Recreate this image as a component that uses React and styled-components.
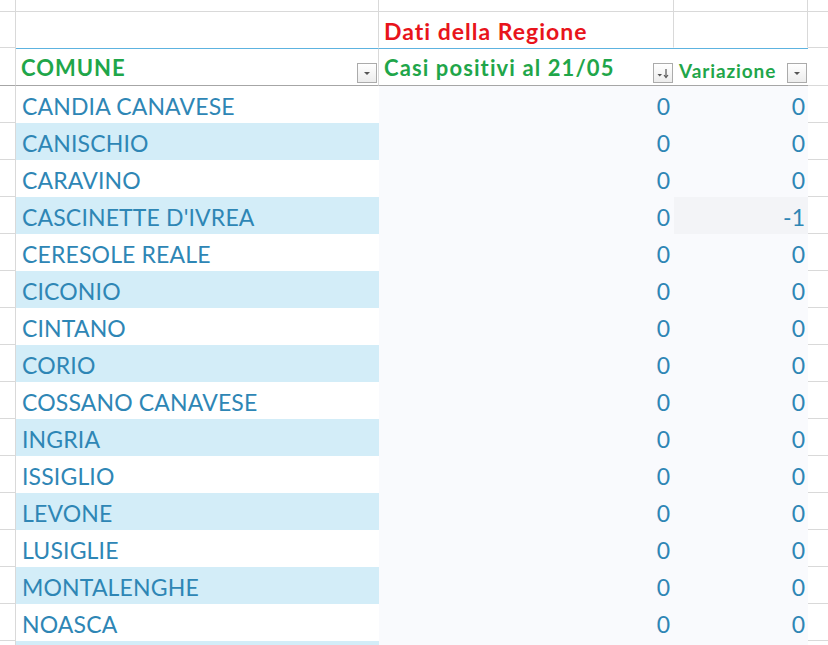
import React from "react";
import styled, { createGlobalStyle } from "styled-components";

const GlobalStyle = createGlobalStyle`
  html, body { margin: 0; padding: 0; background: #ffffff; }
  body { font-family: Lato, "Open Sans", sans-serif; overflow: hidden; }
`;

const COLS = "16px 363px 295px 134px 1fr";
const GRID = "#d9d9d9";

const comuni = [
  ["CANDIA CANAVESE", 0, 0],
  ["CANISCHIO", 0, 0],
  ["CARAVINO", 0, 0],
  ["CASCINETTE D'IVREA", 0, -1],
  ["CERESOLE REALE", 0, 0],
  ["CICONIO", 0, 0],
  ["CINTANO", 0, 0],
  ["CORIO", 0, 0],
  ["COSSANO CANAVESE", 0, 0],
  ["INGRIA", 0, 0],
  ["ISSIGLIO", 0, 0],
  ["LEVONE", 0, 0],
  ["LUSIGLIE", 0, 0],
  ["MONTALENGHE", 0, 0],
  ["NOASCA", 0, 0],
];

const Sheet = styled.div`
  width: 828px;
  height: 645px;
  overflow: hidden;
  background: #fff;
`;

const Row = styled.div`
  display: grid;
  grid-template-columns: ${COLS};
  height: ${(p) => p.h}px;
`;

const Gutter = styled.div`
  border-right: 1px solid ${GRID};
  border-bottom: 1px solid ${(p) => (p.dark ? "#a6a6a6" : GRID)};
`;

const Plain = styled.div`
  border-right: 1px solid ${GRID};
  border-bottom: 1px solid ${(p) => p.line || GRID};
  display: flex;
  align-items: flex-end;
  padding: 0 0 4px 5px;
  box-sizing: border-box;
`;

const Title = styled.span`
  color: #e8141b;
  font-weight: 700;
  font-size: 23px;
  letter-spacing: 1px;
  line-height: 1;
`;

const HeadCell = styled.div`
  border-top: 1px solid #5db3e0;
  border-bottom: 1px solid #a6a6a6;
  border-right: ${(p) => (p.sep ? `1px solid ${GRID}` : "none")};
  display: flex;
  align-items: flex-end;
  justify-content: space-between;
  padding: 0 1px 2px 5px;
  box-sizing: border-box;
`;

const HeadText = styled.span`
  color: #1fa64a;
  font-weight: 700;
  font-size: ${(p) => p.size || 22}px;
  letter-spacing: ${(p) => p.ls || 1}px;
  line-height: 1;
  padding-bottom: ${(p) => p.pb || 4}px;
  white-space: nowrap;
`;

const FilterBtn = styled.div`
  flex: none;
  width: 18px;
  height: 18px;
  border: 1px solid #ababab;
  background: linear-gradient(#ffffff, #ececec);
  display: flex;
  align-items: center;
  justify-content: center;
`;

const Name = styled.div`
  background: ${(p) => (p.stripe ? "#d3edf8" : "#ffffff")};
  color: #2e86b5;
  font-size: 23px;
  letter-spacing: 0.15px;
  display: flex;
  align-items: center;
  padding: 3px 0 0 6px;
  box-sizing: border-box;
  white-space: nowrap;
`;

const Num = styled.div`
  background: ${(p) => (p.sel ? "#f3f4f7" : "#f9fafd")};
  color: #2e86b5;
  font-size: 23px;
  display: flex;
  align-items: center;
  justify-content: flex-end;
  padding: 3px ${(p) => p.pr}px 0 0;
  box-sizing: border-box;
`;

const Edge = styled.div`
  border-bottom: 1px solid ${GRID};
`;

const DropIcon = () => (
  <svg width="10" height="10" viewBox="0 0 10 10">
    <path d="M2 4 L8 4 L5 7 Z" fill="#555" />
  </svg>
);

const SortIcon = () => (
  <svg width="14" height="12" viewBox="0 0 14 12">
    <path d="M1.5 7 L6 7 L3.75 9.5 Z" fill="#555" />
    <path d="M10 2 L10 10" stroke="#555" strokeWidth="1.2" />
    <path d="M8 8 L10 10.5 L12 8" stroke="#555" strokeWidth="1.2" fill="none" />
  </svg>
);

export default function App() {
  return (
    <Sheet>
      <GlobalStyle />
      <Row h={12}>
        <Gutter />
        <Plain />
        <Plain />
        <Plain />
        <Edge />
      </Row>
      <Row h={36}>
        <Gutter />
        <Plain line="transparent" />
        <Plain line="transparent">
          <Title>Dati della Regione</Title>
        </Plain>
        <Plain line="transparent" />
        <Edge />
      </Row>
      <Row h={38}>
        <Gutter dark />
        <HeadCell sep>
          <HeadText>COMUNE</HeadText>
          <FilterBtn><DropIcon /></FilterBtn>
        </HeadCell>
        <HeadCell>
          <HeadText ls={1.1}>Casi positivi al 21/05</HeadText>
          <FilterBtn><SortIcon /></FilterBtn>
        </HeadCell>
        <HeadCell>
          <HeadText size={19} ls={0.9} pb={3}>Variazione</HeadText>
          <FilterBtn><DropIcon /></FilterBtn>
        </HeadCell>
        <Edge />
      </Row>
      {comuni.map(([name, casi, vari], i) => (
        <Row h={37} key={name}>
          <Gutter />
          <Name stripe={i % 2 === 1}>{name}</Name>
          <Num pr={4}>{casi}</Num>
          <Num pr={3} sel={vari !== 0}>{vari}</Num>
          <Edge />
        </Row>
      ))}
      <Row h={37}>
        <Gutter />
        <Name stripe />
        <Num pr={4} />
        <Num pr={3} />
        <Edge />
      </Row>
    </Sheet>
  );
}
